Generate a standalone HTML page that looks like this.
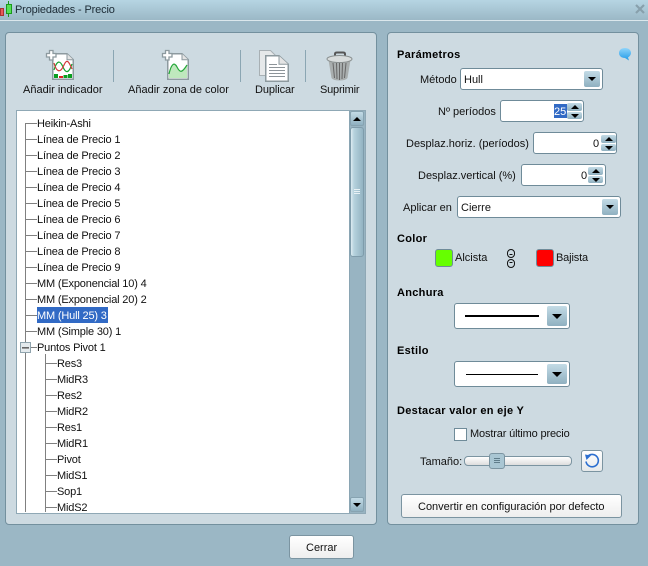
<!DOCTYPE html>
<html><head><meta charset="utf-8"><style>
html,body{margin:0;padding:0}
#r{position:relative;width:648px;height:566px;overflow:hidden;background:#9bb7c5;font:11px "Liberation Sans",sans-serif;color:#111}
#r *{box-sizing:border-box}
.a{position:absolute}
.t{position:absolute;white-space:nowrap;line-height:14px;height:14px;margin-top:1px}
.b{font-weight:bold;color:#000;letter-spacing:.3px}
.panel{position:absolute;background:#cddae1;border:1px solid #73909e;border-radius:4px}
.inp{position:absolute;background:#fff;border:1px solid #6f8b99;border-radius:3px;height:22px}
.sp{position:absolute;width:15px;height:8px;background:linear-gradient(#c3dbe6,#8fb0c0);border-radius:2px}
.dd{position:absolute;background:linear-gradient(#c3dbe6,#8fb0c0);border-radius:2px}
.up,.dn{position:absolute;width:0;height:0;border-left:4px solid transparent;border-right:4px solid transparent}
.up{border-bottom:4px solid #000}.dn{border-top:4px solid #000}
.h{position:absolute;height:1px;background:#808080}
.v{position:absolute;width:1px;background:#808080}
.sep{position:absolute;width:1px;background:#8ba6b3;top:50px;height:32px}
.tr{position:absolute;white-space:nowrap;line-height:14px;color:#111;margin-top:1px;letter-spacing:-.17px}
</style></head><body><div id="r">
<div class="a" style="left:0;top:0;width:648px;height:20px;background:linear-gradient(#b6d5e3,#9bb8c6)"></div>
<div class="a" style="left:0;top:20px;width:648px;height:1px;background:#dbe7ec"></div>
<div class="a" style="left:0;top:8px;width:4px;height:8px;background:#e85a5a;border:1px solid #a33"></div>
<div class="a" style="left:8px;top:1px;width:1px;height:16px;background:#1a9a1a"></div>
<div class="a" style="left:6px;top:4px;width:6px;height:10px;background:#55e055;border:1px solid #1a9a1a"></div>
<div class="t" style="left:15px;top:2px;color:#1c2b35;letter-spacing:-.15px">Propiedades - Precio</div>
<svg class="a" style="left:635px;top:4px" width="10" height="10"><path d="M1 1L9 9M9 1L1 9" stroke="#88a0ac" stroke-width="2.2"/></svg>

<div class="panel" style="left:5px;top:32px;width:372px;height:493px"></div>
<div class="panel" style="left:387px;top:32px;width:252px;height:493px"></div>

<svg class="a" style="left:45px;top:49px" width="30" height="33">
<path d="M7.750 4.750H22l6.250 6V30.250H7.750z" fill="#fff" stroke="#8d9a9f" stroke-width="1.500"/><path d="M22 4.750V10.750h6.250" fill="#e4e4e4" stroke="#8d9a9f"/>
<path d="M9 21C12 11 15 11 18 18S24 24 27 15" fill="none" stroke="#12a32c" stroke-width="1.200"/>
<path d="M9 14C12 25 16 23 19 16S24 13 27 20" fill="none" stroke="#d43a3a" stroke-width="1.200"/>
<rect x="9" y="25" width="4" height="4" fill="#0a9e20"/><rect x="14" y="27" width="4" height="2" fill="#d22"/><rect x="18.500" y="26" width="4" height="3" fill="#0a9e20"/><rect x="23" y="25" width="4" height="4" fill="#0a9e20"/>
<path d="M4.500 1.500h3.500v3h3v3.500h-3v3h-3.500v-3h-3v-3.500h3z" fill="#fff" stroke="#8d9a9f" stroke-width="1.300"/></svg>
<div class="t" style="left:23px;top:82px">Añadir indicador</div>
<div class="sep" style="left:113px"></div>
<svg class="a" style="left:161px;top:49px" width="30" height="33">
<path d="M6.750 4.750H21l6.250 6V30.250H6.750z" fill="#fff" stroke="#8d9a9f" stroke-width="1.500"/><path d="M21 4.750V10.750h6.250" fill="#e4e4e4" stroke="#8d9a9f"/>
<path d="M8 29V25C10 16 13 12 16 18S21 24 26 16V29z" fill="#bfe8bd"/>
<path d="M8 25C10 16 13 12 16 18S21 24 26 16" fill="none" stroke="#26a83a" stroke-width="1.200"/>
<path d="M4.500 1.500h3.500v3h3v3.500h-3v3h-3.500v-3h-3v-3.500h3z" fill="#fff" stroke="#8d9a9f" stroke-width="1.300"/></svg>
<div class="t" style="left:128px;top:82px">Añadir zona de color</div>
<div class="sep" style="left:240px"></div>
<svg class="a" style="left:258px;top:49px" width="32" height="34">
<path d="M1.500 1.500H12.500l5 5V26.500H1.500z" fill="#e6e9ea" stroke="#a8b0b4"/>
<path d="M7.750 6.750H21l9.250 8.500V32.250H7.750z" fill="#fff" stroke="#8d9a9f" stroke-width="1.500"/><path d="M21 6.750V15.250h9.250" fill="#e4e4e4" stroke="#8d9a9f"/>
<path d="M11 15.500h8M11 18.500h16M11 21.500h16M11 24.500h16M11 27.500h16" stroke="#8d9499"/></svg>
<div class="t" style="left:255px;top:82px;letter-spacing:-.1px">Duplicar</div>
<div class="sep" style="left:305px"></div>
<svg class="a" style="left:326px;top:50px" width="28" height="32">
<path d="M9 7V4Q9 2.500 11 2.500h6q2 0 2 1.500V7" fill="none" stroke="#555" stroke-width="2"/>
<path d="M2.500 10L5.500 28Q7 30.500 13.500 30.500T21.500 28L24.500 10z" fill="#a9aeae"/>
<path d="M7 13L8.500 28M10.500 13L11 29M13.500 13V30M16.500 13L16 29M20 13L18.500 28" stroke="#666"/>
<ellipse cx="13.500" cy="9" rx="12.500" ry="3.500" fill="#d8dcdc" stroke="#8a9090"/></svg>
<div class="t" style="left:320px;top:82px;letter-spacing:-.2px">Suprimir</div>

<!-- tree -->
<div class="a" style="left:16px;top:110px;width:350px;height:404px;background:#fff;border:1px solid #8fa8b5"></div>
<div class="a" style="left:349px;top:111px;width:16px;height:402px;background:#98b4c2;border-left:1px solid #8aa5b3"></div>
<div class="dd" style="left:350px;top:111px;width:14px;height:15px;border:1px solid #87a3b1"></div>
<div class="up" style="left:353px;top:117px"></div>
<div class="a" style="left:350px;top:127px;width:14px;height:130px;border:1px solid #7f9cab;border-radius:3px;background:linear-gradient(90deg,#dcebf1,#b6d2dd 25%,#93b3c2)"></div>
<div class="a" style="left:354px;top:189px;width:6px;height:1px;background:#e8f1f5;box-shadow:0 2px #e8f1f5,0 4px #e8f1f5"></div>
<div class="dd" style="left:350px;top:497px;width:14px;height:15px;border:1px solid #87a3b1"></div>
<div class="dn" style="left:353px;top:503px"></div>

<div class="v" style="left:25px;top:123px;height:389px"></div>
<div class="h" style="left:25px;top:123px;width:12px"></div><div class="tr" style="left:37px;top:116px">Heikin-Ashi</div>
<div class="h" style="left:25px;top:139px;width:12px"></div><div class="tr" style="left:37px;top:132px">Línea de Precio 1</div>
<div class="h" style="left:25px;top:155px;width:12px"></div><div class="tr" style="left:37px;top:148px">Línea de Precio 2</div>
<div class="h" style="left:25px;top:171px;width:12px"></div><div class="tr" style="left:37px;top:164px">Línea de Precio 3</div>
<div class="h" style="left:25px;top:187px;width:12px"></div><div class="tr" style="left:37px;top:180px">Línea de Precio 4</div>
<div class="h" style="left:25px;top:203px;width:12px"></div><div class="tr" style="left:37px;top:196px">Línea de Precio 5</div>
<div class="h" style="left:25px;top:219px;width:12px"></div><div class="tr" style="left:37px;top:212px">Línea de Precio 6</div>
<div class="h" style="left:25px;top:235px;width:12px"></div><div class="tr" style="left:37px;top:228px">Línea de Precio 7</div>
<div class="h" style="left:25px;top:251px;width:12px"></div><div class="tr" style="left:37px;top:244px">Línea de Precio 8</div>
<div class="h" style="left:25px;top:267px;width:12px"></div><div class="tr" style="left:37px;top:260px">Línea de Precio 9</div>
<div class="h" style="left:25px;top:283px;width:12px"></div><div class="tr" style="left:37px;top:276px">MM (Exponencial 10) 4</div>
<div class="h" style="left:25px;top:299px;width:12px"></div><div class="tr" style="left:37px;top:292px">MM (Exponencial 20) 2</div>
<div class="h" style="left:25px;top:315px;width:12px"></div>
<div class="a" style="left:37px;top:307px;width:71px;height:16px;background:#316ac5"></div>
<div class="tr" style="left:37px;top:308px;color:#fff">MM (Hull 25) 3</div>
<div class="h" style="left:25px;top:331px;width:12px"></div><div class="tr" style="left:37px;top:324px">MM (Simple 30) 1</div>
<div class="h" style="left:25px;top:347px;width:12px"></div>
<div class="a" style="left:20px;top:342px;width:11px;height:11px;background:#e4eaed;border:1px solid #8fa3ad"></div>
<div class="a" style="left:22px;top:347px;width:7px;height:1px;background:#666;box-shadow:0 1px #999"></div>
<div class="tr" style="left:37px;top:340px">Puntos Pivot 1</div>
<div class="v" style="left:45px;top:354px;height:158px"></div>
<div class="h" style="left:45px;top:363px;width:12px"></div><div class="tr" style="left:57px;top:356px">Res3</div>
<div class="h" style="left:45px;top:379px;width:12px"></div><div class="tr" style="left:57px;top:372px">MidR3</div>
<div class="h" style="left:45px;top:395px;width:12px"></div><div class="tr" style="left:57px;top:388px">Res2</div>
<div class="h" style="left:45px;top:411px;width:12px"></div><div class="tr" style="left:57px;top:404px">MidR2</div>
<div class="h" style="left:45px;top:427px;width:12px"></div><div class="tr" style="left:57px;top:420px">Res1</div>
<div class="h" style="left:45px;top:443px;width:12px"></div><div class="tr" style="left:57px;top:436px">MidR1</div>
<div class="h" style="left:45px;top:459px;width:12px"></div><div class="tr" style="left:57px;top:452px">Pivot</div>
<div class="h" style="left:45px;top:475px;width:12px"></div><div class="tr" style="left:57px;top:468px">MidS1</div>
<div class="h" style="left:45px;top:491px;width:12px"></div><div class="tr" style="left:57px;top:484px">Sop1</div>
<div class="h" style="left:45px;top:507px;width:12px"></div><div class="tr" style="left:57px;top:500px">MidS2</div>

<!-- right -->
<div class="t b" style="left:397px;top:47px">Parámetros</div>
<svg class="a" style="left:618px;top:47px" width="14" height="14"><defs><linearGradient id="g" x1="0" y1="0" x2="0" y2="1"><stop offset="0" stop-color="#8fd4fa"/><stop offset="1" stop-color="#1f9ae8"/></linearGradient></defs><path d="M7 1C3.500 1 1 3 1 6s2.500 5 6 5l4 2.500-1-3C11.500 9.500 13 8 13 6c0-3-2.500-5-6-5z" fill="url(#g)"/></svg>

<div class="t" style="left:420px;top:72px">Método</div>
<div class="inp" style="left:460px;top:68px;width:143px"></div>
<div class="t" style="left:464px;top:72px">Hull</div>
<div class="dd" style="left:584px;top:71px;width:16px;height:16px"></div><div class="dn" style="left:588px;top:77px"></div>

<div class="t" style="left:438px;top:104px">Nº períodos</div>
<div class="inp" style="left:500px;top:100px;width:84px"></div>
<div class="a" style="left:554px;top:104px;width:13px;height:14px;background:#316ac5"></div>
<div class="t" style="left:554px;top:104px;color:#fff">25</div>
<div class="sp" style="left:567px;top:103px"></div><div class="up" style="left:571px;top:105px"></div>
<div class="sp" style="left:567px;top:112px;height:7px"></div><div class="dn" style="left:571px;top:114px"></div>

<div class="t" style="left:406px;top:136px">Desplaz.horiz. (períodos)</div>
<div class="inp" style="left:533px;top:132px;width:84px"></div>
<div class="t" style="left:593px;top:136px">0</div>
<div class="sp" style="left:601px;top:135px"></div><div class="up" style="left:605px;top:137px"></div>
<div class="sp" style="left:601px;top:144px;height:7px"></div><div class="dn" style="left:605px;top:146px"></div>

<div class="t" style="left:418px;top:168px">Desplaz.vertical (%)</div>
<div class="inp" style="left:521px;top:164px;width:85px"></div>
<div class="t" style="left:581px;top:168px">0</div>
<div class="sp" style="left:588px;top:167px"></div><div class="up" style="left:592px;top:169px"></div>
<div class="sp" style="left:588px;top:176px;height:7px"></div><div class="dn" style="left:592px;top:178px"></div>

<div class="t" style="left:403px;top:200px">Aplicar en</div>
<div class="inp" style="left:457px;top:196px;width:164px"></div>
<div class="t" style="left:461px;top:200px">Cierre</div>
<div class="dd" style="left:602px;top:199px;width:16px;height:16px"></div><div class="dn" style="left:606px;top:205px"></div>

<div class="t b" style="left:397px;top:231px">Color</div>
<div class="a" style="left:435px;top:249px;width:18px;height:18px;background:#66ff00;border:1px solid #6f8b99;border-radius:3px"></div>
<div class="t" style="left:455px;top:250px">Alcista</div>
<svg class="a" style="left:506px;top:249px" width="10" height="19" fill="none" stroke="#111"><rect x="1.500" y=".5" width="7" height="8" rx="3.500"/><rect x="1.500" y="10.500" width="7" height="8" rx="3.500"/><path d="M3.500 5.500h3M3.500 13.500h3"/></svg>
<div class="a" style="left:536px;top:249px;width:18px;height:18px;background:#f00;border:1px solid #6f8b99;border-radius:3px"></div>
<div class="t" style="left:556px;top:250px;letter-spacing:-.15px">Bajista</div>

<div class="t b" style="left:397px;top:285px">Anchura</div>
<div class="inp" style="left:454px;top:303px;width:116px;height:26px"></div>
<div class="a" style="left:465px;top:315px;width:74px;height:2px;background:#000"></div>
<div class="dd" style="left:547px;top:306px;width:20px;height:20px"></div>
<div class="dn" style="left:552px;top:314px;border-left-width:5px;border-right-width:5px;border-top-width:5px"></div>

<div class="t b" style="left:397px;top:343px">Estilo</div>
<div class="inp" style="left:454px;top:361px;width:116px;height:26px"></div>
<div class="a" style="left:466px;top:374px;width:72px;height:1px;background:#000"></div>
<div class="dd" style="left:547px;top:364px;width:20px;height:20px"></div>
<div class="dn" style="left:552px;top:372px;border-left-width:5px;border-right-width:5px;border-top-width:5px"></div>

<div class="t b" style="left:397px;top:403px">Destacar valor en eje Y</div>
<div class="a" style="left:454px;top:428px;width:13px;height:13px;background:#fff;border:1px solid #6f8b99"></div>
<div class="t" style="left:470px;top:426px;letter-spacing:-.15px">Mostrar último precio</div>

<div class="t" style="left:420px;top:454px">Tamaño:</div>
<div class="a" style="left:464px;top:456px;width:108px;height:10px;background:linear-gradient(#fff,#ddd);border:1px solid #7b94a1;border-radius:4px"></div>
<div class="a" style="left:489px;top:453px;width:16px;height:16px;background:#a9c6d3;border:1px solid #7b94a1;border-radius:3px"></div>
<div class="a" style="left:494px;top:458px;width:6px;height:1px;background:#5f7c8a;box-shadow:0 2px #5f7c8a,0 4px #5f7c8a"></div>
<div class="a" style="left:581px;top:450px;width:22px;height:22px;background:linear-gradient(#fff,#e6e9ea);border:1px solid #7b94a1;border-radius:3px"></div>
<svg class="a" style="left:584px;top:453px" width="16" height="16" fill="none"><path d="M3.500 3.500A6.200 6.200 0 1 1 2 8.500" stroke="#2c6fd0" stroke-width="1.600"/><path d="M1 1.500L7 2.500L2.500 7z" fill="#2c6fd0"/></svg>

<div class="a" style="left:401px;top:494px;width:221px;height:24px;background:linear-gradient(#fff,#eee);border:1px solid #7b94a1;border-radius:3px"></div>
<div class="t" style="left:418px;top:499px">Convertir en configuración por defecto</div>

<div class="a" style="left:289px;top:535px;width:65px;height:24px;background:linear-gradient(#fff,#eee);border:1px solid #7b94a1;border-radius:3px"></div>
<div class="t" style="left:306px;top:540px">Cerrar</div>
</div></body></html>
